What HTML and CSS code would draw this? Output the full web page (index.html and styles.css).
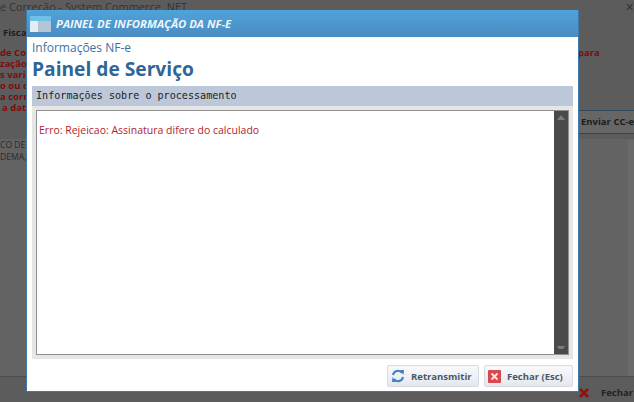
FILE: index.html
```html
<!DOCTYPE html>
<html lang="pt">
<head>
<meta charset="utf-8">
<title>Painel de Informação da NF-e</title>
<link rel="stylesheet" href="styles.css">
</head>
<body>
<div class="app">
  <div class="app-title">e Correção - System Commerce .NET</div>
  <div class="app-close">✕</div>
  <div class="app-tab">Fisca</div>
  <div class="app-warn left">
    <div>de Co</div><div>zação</div><div>s vari</div><div>o ou c</div><div>a corr</div><div class="indent">a dat</div>
  </div>
  <div class="app-warn right">para</div>
  <div class="app-send">Enviar CC-e</div>
  <div class="app-panel"></div>
  <div class="app-scroll"></div>
  <div class="app-text"><div>CO DE</div><div>DEMA,</div></div>
  <div class="app-foot">
    <svg class="foot-x" width="12" height="12" viewBox="0 0 12 12"><path d="M2 2 L10 10 M10 2 L2 10" stroke="#8e1414" stroke-width="3"/></svg>
    <span>Fechar</span>
  </div>
</div>

<div class="modal">
  <header class="modal-head">
    <svg width="21" height="16" viewBox="0 0 21 16" class="head-icon">
      <rect width="21" height="16" fill="#d3e2ee"/>
      <rect width="21" height="5" fill="#6fc0e8"/>
      <rect x="0" y="5" width="8" height="11" fill="#e4edf3"/>
      <rect x="8" y="5" width="13" height="11" fill="#b4c6d4"/>
    </svg>
    <span>PAINEL DE INFORMAÇÃO DA NF-E</span>
  </header>
  <div class="modal-body">
    <div class="sub">Informações NF-e</div>
    <h1 class="title">Painel de Serviço</h1>
    <div class="bar">Informações sobre o processamento</div>
    <div class="box-wrap">
      <div class="box">
        <div class="msg">Erro: Rejeicao: Assinatura difere do calculado</div>
        <div class="scroll">
          <svg width="8" height="5" viewBox="0 0 8 5"><path d="M0 5 L4 0 L8 5 Z" fill="#7c7c7c"/></svg>
          <svg width="8" height="3" viewBox="0 0 8 3"><path d="M0 0 H8 L6 3 H2 Z" fill="#7c7c7c"/></svg>
        </div>
      </div>
    </div>
    <div class="actions">
      <button class="btn btn-a">
        <svg width="14" height="14" viewBox="0 0 14 14"><path d="M2 6 A5 5 0 0 1 11 4" fill="none" stroke="#3f7fc0" stroke-width="2"/><path d="M9 1 L13 1 L12.5 6 Z" fill="#3f7fc0"/><path d="M12 8 A5 5 0 0 1 3 10" fill="none" stroke="#3f7fc0" stroke-width="2"/><path d="M5 13 L1 13 L1.5 8 Z" fill="#3f7fc0"/></svg>
        <span>Retransmitir</span>
      </button>
      <button class="btn btn-b">
        <svg width="13" height="13" viewBox="0 0 13 13"><rect width="13" height="13" rx="1" fill="#d9484c"/><path d="M3.5 3.5 L9.5 9.5 M9.5 3.5 L3.5 9.5" stroke="#f6e4e4" stroke-width="2"/></svg>
        <span>Fechar (Esc)</span>
      </button>
    </div>
  </div>
</div>
</body>
</html>
```

FILE: styles.css
```css
* { box-sizing: border-box; }
html, body { margin: 0; height: 100%; }
body {
  width: 634px;
  height: 402px;
  overflow: hidden;
  background: #5c5c5c;
  font-family: "Open Sans", "Liberation Sans", sans-serif;
  position: relative;
}
.app { position: absolute; inset: 0; color: #2a2a2a; }
.app > * { position: absolute; }
.app-title { left: 0; top: 1px; font-size: 11px; line-height: 12px; color: #333; white-space: nowrap; }
.app-close { right: 0; top: 1px; font-size: 11px; line-height: 12px; color: #333; }
.app-tab { left: 3px; top: 27px; font-size: 9.5px; font-weight: 700; line-height: 12px; color: #1c1c1c; }
.app-warn { font-size: 9.5px; font-weight: 700; line-height: 11px; color: #7f0c0d; white-space: nowrap; }
.app-warn.left { left: 0; top: 47px; }
.indent { padding-left: 2px; }
.app-warn.right { left: 578px; top: 47px; }
.app-send {
  left: 578px; top: 110px; width: 56px; height: 24px;
  border-top: 1px solid #30465f; border-bottom: 1px solid #30465f;
  background: #666;
  font-size: 9.5px; font-weight: 700; line-height: 22px; padding-left: 3px; color: #1c1c1c;
  white-space: nowrap; overflow: hidden;
}
.app-panel { left: 0; top: 139px; width: 634px; height: 238px; background: #636363; border-bottom: 1px solid #4c4c4c; }
.app-scroll { left: 628px; top: 140px; width: 6px; height: 236px; background: #6a6a6a; }
.app-text { left: 0; top: 139px; font-size: 8.6px; line-height: 12px; color: #2a2a2a; }
.app-foot { left: 578px; top: 386px; display: flex; align-items: center; gap: 11px; font-size: 9.5px; font-weight: 700; color: #222; white-space: nowrap; }
.foot-x { flex: none; }

.modal {
  position: absolute;
  left: 26px; top: 10px;
  width: 553px; height: 382px;
  background: #fff;
  border: 1px solid #3f78ab;
  border-top: 0;
  display: flex;
  flex-direction: column;
}
.modal-head {
  height: 27px;
  flex: none;
  background: linear-gradient(#4fa3da, #4a8cc1);
  color: #eef5fb;
  display: flex;
  align-items: center;
  gap: 5px;
  padding-left: 3px;
  font-size: 11.3px;
  font-weight: 700;
  font-style: italic;
}
.head-icon { flex: none; }
.modal-body { flex: 1; display: flex; flex-direction: column; padding: 3px 5px 3px 5px; min-height: 0; }
.sub { font-size: 12px; line-height: 16px; color: #41709f; }
.title { margin: 0; font-size: 19.2px; line-height: 26px; font-weight: 700; color: #2f6697; }
.bar {
  height: 20px; flex: none; margin-top: 4px;
  background: #bcc8da;
  font-family: "DejaVu Sans Mono", "Liberation Mono", monospace;
  font-size: 10.1px; line-height: 19px; padding-left: 4px; color: #222;
}
.box-wrap { height: 253px; flex: none; padding: 4px; background: #e6e6e6; }
.box { height: 100%; background: #fff; border: 1px solid #8f8f8f; display: flex; position: relative; }
.msg { flex: 1; padding: 12px 0 0 2px; font-size: 10.5px; line-height: 14px; color: #b3232b; }
.scroll { width: 14px; flex: none; background: #4a4a4a; display: flex; flex-direction: column; align-items: center; justify-content: space-between; padding: 4px 0 5px; }
.actions { flex: 1; display: flex; justify-content: flex-end; align-items: flex-start; gap: 5px; padding-top: 6px; }
.btn {
  height: 22px; display: flex; align-items: center; padding: 0;
  border: 1px solid #d6dbe2; border-radius: 2px;
  background: linear-gradient(#f8f9fb, #e4e8ee);
  font-family: "Open Sans", "Liberation Sans", sans-serif;
  font-size: 9.5px; font-weight: 700; color: #4a5866;
}
.btn-a { width: 92px; padding-left: 3px; gap: 6px; }
.btn-b { width: 89px; padding-left: 3px; gap: 6px; }
```
